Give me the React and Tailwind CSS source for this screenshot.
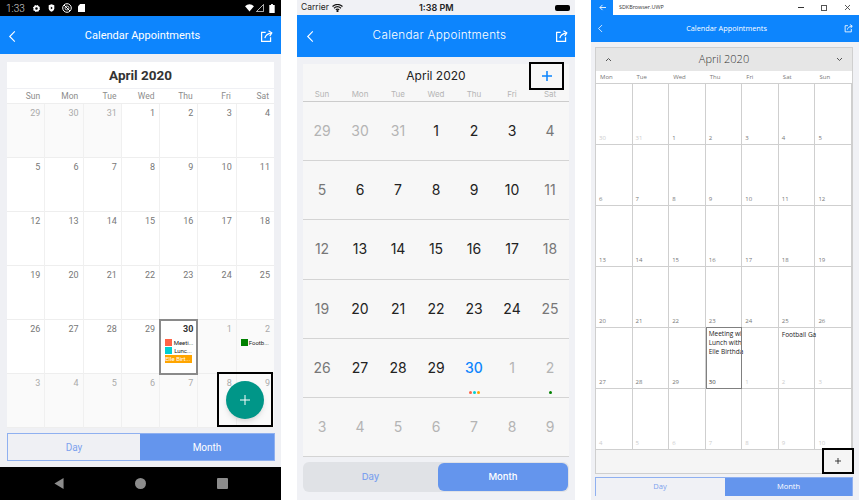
import React from 'react'

const sunWeek = ['Sun', 'Mon', 'Tue', 'Wed', 'Thu', 'Fri', 'Sat']
const monWeek = ['Mon', 'Tue', 'Wed', 'Thu', 'Fri', 'Sat', 'Sun']

// [day, inMonth]
const buildDays = (prev, prevEnd, total) => {
  const days = []
  for (let d = prev; d <= prevEnd; d++) days.push([d, false])
  for (let d = 1; d <= 30; d++) days.push([d, true])
  let n = 1
  while (days.length < total) days.push([n++, false])
  return days
}

const sunDays = buildDays(29, 31, 42)
const monDays = buildDays(30, 31, 42)

const ShareIcon = ({ size = 14 }) => (
  <svg width={size} height={size} viewBox="0 0 16 16" fill="none" stroke="white" strokeWidth="1.5">
    <path d="M7 3H2v11h11V9" />
    <path d="M6 10c.5-3 3-5.500 8.500-6.500" />
    <path d="M10.500 1l4 2.500-2.500 4" />
  </svg>
)

const BackIcon = ({ size = 14 }) => (
  <svg width={size} height={size} viewBox="0 0 14 14" fill="none" stroke="white" strokeWidth="1.2">
    <path d="M9.500 1.500 4 7l5.500 5.500" />
  </svg>
)

const AndroidStatus = () => (
  <div className="h-[16px] bg-black flex items-center pl-[6px] pr-[6px] text-white shrink-0">
    <span className="text-[10px] text-[#d8d8d8] w-[27px] font-light">1:33</span>
    <svg width="7" height="7" viewBox="0 0 10 10"><circle cx="5" cy="5" r="3" fill="none" stroke="white" strokeWidth="2.400" /><circle cx="5" cy="5" r="4.200" fill="none" stroke="white" strokeWidth="1.600" strokeDasharray="1.800 1.500" /></svg>
    <svg width="7" height="8" viewBox="0 0 10 11" className="ml-[8px]"><path d="M1 1.500 5 0l4 1.500V6c0 2.500-2 4-4 5-2-1-4-2.500-4-5z" fill="white" /><path d="M4 3.500 6.800 5.500 4 7.500z" fill="black" /></svg>
    <svg width="10" height="10" viewBox="0 0 10 10" fill="none" stroke="white" className="ml-[7px]"><circle cx="5" cy="5" r="4.300" /><path d="M2 2l6 6" /><circle cx="5" cy="5" r="2" strokeWidth="0.800" /></svg>
    <svg width="7" height="8" viewBox="0 0 8 9" className="ml-[6px]"><path d="M2.500 0H8v9H0V2.500z" fill="white" /></svg>
    <div className="ml-auto flex items-center gap-[2px]">
      <svg width="9" height="8" viewBox="0 0 10 9"><path d="M0 2.500C3-.5 7-.5 10 2.500L5 8.500z" fill="white" /></svg>
      <svg width="8" height="8" viewBox="0 0 9 9"><path d="M8.500.5v8H.5z" fill="none" stroke="white" strokeWidth="0.800" /></svg>
      <svg width="6" height="9" viewBox="0 0 6 10" className="ml-[3px]"><path d="M2 0h2v1h2v9H0V1h2z" fill="white" /></svg>
    </div>
  </div>
)

const AndroidPanel = () => (
  <div className="w-[281px] h-[500px] bg-[#eff0f4] flex flex-col shrink-0 font-['Roboto',sans-serif]">
    <AndroidStatus />
    <div className="h-[38px] pt-[2px] bg-[#0d85fd] flex items-center justify-between pl-[6px] pr-[8px] text-white shrink-0">
      <BackIcon size={13} />
      <span className="ml-[6px] text-[11px]">Calendar Appointments</span>
      <ShareIcon size={13} />
    </div>
    <div className="mx-[7px] mt-[8px] w-[267px] relative">
      <div className="h-[26px] pt-[1px] bg-white flex items-center justify-center text-[13.500px] font-bold text-[#333]">April 2020</div>
      <div className="mt-[1px] h-[15px] bg-white grid grid-cols-7 border-b border-[#eee]">
        {sunWeek.map((d) => (
          <span key={d} className="text-[8.500px] text-[#8c8c8c] text-right pr-[5px] leading-[14px]">{d}</span>
        ))}
      </div>
      <div className="grid grid-cols-7 bg-[#f0f0f0] gap-x-[1px]">
        {sunDays.map(([d, cur], i) => {
          const today = d === 30 && cur
          return (
            <div
              key={i}
              className={`h-[54px] pr-[4px] pt-[3px] text-right text-[9px] border-b border-[#eeeeee] ${cur ? 'bg-white' : 'bg-[#fafafa]'} ${today ? 'relative z-10 outline-2 outline-[#8a8a8a] -outline-offset-1 font-bold text-[#333]' : cur ? 'text-[#777]' : 'text-[#aaa]'}`}
            >
              <div className="leading-[12px]">{d}</div>
              {today && (
                <div className="mt-[4px] pl-[5px] flex flex-col gap-[1px] font-normal text-[6px] text-left leading-[7px] whitespace-nowrap">
                  <div className="flex items-center gap-[2px] text-[#222]"><span className="w-[7px] h-[7px] bg-[#ff6347]" />Meeti...</div>
                  <div className="flex items-center gap-[2px] text-[#222]"><span className="w-[7px] h-[7px] bg-[#00ced1]" />Lunc...</div>
                  <div className="bg-[#ffa500] text-white h-[8px] w-[27px] leading-[8px]">Elle Birt...</div>
                </div>
              )}
              {i === 34 && (
                <div className="mt-[4px] pl-[4px] flex items-center gap-[1px] text-[6px] text-left text-[#222] leading-[7px] whitespace-nowrap -mr-[3px]">
                  <span className="w-[7px] h-[7px] bg-[#008000] shrink-0" />Footb...
                </div>
              )}
            </div>
          )
        })}
      </div>
      <div className="absolute left-[210px] top-[310px] z-20 w-[56px] h-[55px] border-[2px] border-black flex items-center justify-center">
        <div className="w-[38px] h-[38px] rounded-full bg-[#009688] shadow-md flex items-center justify-center">
          <svg width="10" height="10" viewBox="0 0 10 10" stroke="white" strokeWidth="1"><path d="M5 0v10M0 5h10" /></svg>
        </div>
      </div>
    </div>
    <div className="mx-[7px] mt-[5px] h-[28px] w-[268px] border border-[#8fb0f0] flex text-[10px] shrink-0">
      <div className="w-[132px] flex items-center justify-center text-[#7ea2ee]">Day</div>
      <div className="flex-1 bg-[#6495ed] flex items-center justify-center text-white">Month</div>
    </div>
    <div className="mt-[6px] flex-1 bg-black flex items-center justify-center gap-[71px]">
      <svg width="10" height="11" viewBox="0 0 10 12"><path d="M10 0v12L0 6z" fill="#8c8c8c" /></svg>
      <span className="w-[11px] h-[11px] rounded-full bg-[#8c8c8c]" />
      <span className="w-[11px] h-[11px] rounded-[1px] bg-[#8c8c8c]" />
    </div>
  </div>
)

const IosPanel = () => (
  <div className="ml-[16px] w-[278px] h-[500px] bg-[#f0f1f5] flex flex-col shrink-0 font-['Inter',sans-serif]">
    <div className="h-[15px] flex items-center pl-[4px] pr-[5px] text-[8.500px] text-[#222] shrink-0 relative">
      <span>Carrier</span>
      <svg width="11" height="8" viewBox="0 0 11 8" className="ml-[3px]" fill="none" stroke="#111" strokeWidth="1.200"><path d="M.5 2.500c3-2.500 7-2.500 10 0M2 4.200c2-1.700 5-1.700 7 0M3.800 5.800c1-.8 2.400-.8 3.400 0" /><circle cx="5.500" cy="7" r=".5" fill="#111" /></svg>
      <span className="absolute left-[122px] text-[9px] font-semibold">1:38 PM</span>
      <span className="ml-auto w-[15px] h-[6px] rounded-[2px] bg-black" />
    </div>
    <div className="h-[42px] bg-[#0d85fd] flex items-center justify-between pl-[7px] pr-[7px] text-white shrink-0">
      <BackIcon size={13} />
      <span className="ml-[7px] text-[11.700px] tracking-[0.300px] font-light">Calendar Appointments</span>
      <ShareIcon size={13} />
    </div>
    <div className="mx-[6px] mt-[7px] w-[266px] bg-[#f7f7f7] relative">
      <div className="h-[23px] flex items-center justify-center text-[12px] text-[#222]">April 2020</div>
      <div className="h-[15px] grid grid-cols-7 border-b border-[#ccc]">
        {sunWeek.map((d) => (
          <span key={d} className="text-[8px] text-[#b5b5b5] text-center leading-[14px]">{d}</span>
        ))}
      </div>
      <div className="grid grid-cols-7">
        {sunDays.map(([d, cur], i) => {
          const weekend = i % 7 === 0 || i % 7 === 6
          const today = d === 30 && cur
          return (
            <div key={i} className="h-[59.200px] border-b border-[#d4d4d4] flex flex-col items-center pt-[21px] relative">
              <span className={`text-[14px] leading-[15px] ${today ? 'text-[#0d85fd] font-medium' : !cur ? 'text-[#b4b4b4]' : weekend ? 'text-[#777]' : 'text-[#222]'}`}>{d}</span>
              {today && (
                <div className="absolute bottom-[3px] flex gap-[1px]">
                  <span className="w-[3px] h-[3px] rounded-full bg-[#ff6347]" />
                  <span className="w-[3px] h-[3px] rounded-full bg-[#00ced1]" />
                  <span className="w-[3px] h-[3px] rounded-full bg-[#ffa500]" />
                </div>
              )}
              {i === 34 && <span className="absolute bottom-[3px] w-[3px] h-[3px] rounded-full bg-[#008000]" />}
            </div>
          )
        })}
      </div>
      <div className="absolute left-[226px] -top-[2px] w-[35px] h-[28px] border-[2px] border-black flex items-center justify-center">
        <svg width="10" height="10" viewBox="0 0 11 11" stroke="#0d85fd" strokeWidth="1.700"><path d="M5.500 0v11M0 5.500h11" /></svg>
      </div>
    </div>
    <div className="mx-[6px] mt-[5px] w-[266px] h-[30px] rounded-[6px] bg-[#e0e2e6] flex text-[9.500px] font-medium shrink-0">
      <div className="w-[135px] flex items-center justify-center text-[#7ea2ee]">Day</div>
      <div className="flex-1 my-[1px] mr-[1px] rounded-[6px] bg-[#6495ed] flex items-center justify-center text-white">Month</div>
    </div>
  </div>
)

const UwpPanel = () => (
  <div className="ml-[16px] w-[268px] h-[500px] bg-[#f0f1f5] flex flex-col shrink-0 font-['Open_Sans',sans-serif]">
    <div className="h-[15px] bg-white flex items-center text-[5.400px] text-[#333] shrink-0">
      <div className="w-[22px] h-[15px] bg-[#0d85fd] flex items-center justify-center">
        <svg width="7" height="7" viewBox="0 0 8 8" fill="none" stroke="white"><path d="M8 4H1M4 1 1 4l3 3" /></svg>
      </div>
      <span className="ml-[6px]">SDKBrowser.UWP</span>
      <div className="ml-auto mr-[8px] flex items-center gap-[17px]">
        <span className="w-[6px] h-[1px] bg-[#333]" />
        <span className="w-[6px] h-[6px] border border-[#555]" />
        <svg width="7" height="7" viewBox="0 0 7 7" stroke="#333" strokeWidth="0.800"><path d="M1 1l5 5M6 1 1 6" /></svg>
      </div>
    </div>
    <div className="h-[27px] bg-[#0d85fd] flex items-center justify-between pl-[5px] pr-[6px] text-white shrink-0">
      <BackIcon size={9} />
      <span className="ml-[4px] text-[7.300px]">Calendar Appointments</span>
      <ShareIcon size={9} />
    </div>
    <div className="mx-[4px] mt-[5px] w-[258px] border border-[#cfcfcf] relative flex flex-col">
      <div className="h-[23px] bg-[#e6e6e6] flex items-center justify-between px-[9px] text-[#333]">
        <svg width="7" height="5" viewBox="0 0 7 5" fill="none" stroke="#555"><path d="M1 4l2.500-2.500L6 4" /></svg>
        <span className="text-[11px] font-light">April 2020</span>
        <svg width="7" height="5" viewBox="0 0 7 5" fill="none" stroke="#555"><path d="M1 1l2.500 2.500L6 1" /></svg>
      </div>
      <div className="h-[13px] bg-white grid grid-cols-7 border-b border-[#cfcfcf]">
        {monWeek.map((d) => (
          <span key={d} className="text-[6px] text-[#777] pl-[4px] leading-[12px]">{d}</span>
        ))}
      </div>
      <div className="grid grid-cols-7 bg-white">
        {monDays.map(([d, cur], i) => {
          const today = d === 30 && cur
          return (
            <div
              key={i}
              className={`h-[61px] border-r border-b border-[#cfcfcf] flex flex-col justify-between pl-[3px] pb-[1px] relative text-[6px] ${today ? 'z-10 -mt-[1px] h-[62px] outline outline-1 outline-[#808080] -outline-offset-1 text-[#333]' : cur ? 'text-[#777]' : 'text-[#ccc]'}`}
            >
              <div className="text-[6.500px] text-[#222] leading-[9px] pt-[2px] whitespace-nowrap">
                {today && (<><div>Meeting wi</div><div>Lunch with</div><div>Elle Birthda</div></>)}
                {i === 33 && <div>Football Ga</div>}
              </div>
              <span>{d}</span>
            </div>
          )
        })}
      </div>
      <div className="h-[23px] bg-[#f5f5f5] relative">
        <div className="absolute left-[226px] -top-[2px] w-[32px] h-[26px] border-[2px] border-black flex items-center justify-center">
          <svg width="6" height="6" viewBox="0 0 7 7" stroke="#222"><path d="M3.500 0v7M0 3.500h7" /></svg>
        </div>
      </div>
    </div>
    <div className="mx-[4px] mt-[3px] w-[258px] h-[19px] border border-[#8fb0f0] border-b-0 flex text-[7.500px] shrink-0">
      <div className="w-[128px] flex items-center justify-center text-[#7ea2ee]">Day</div>
      <div className="flex-1 ml-[1px] bg-[#6495ed] flex items-center justify-center text-white">Month</div>
    </div>
  </div>
)

const App = () => (
  <div className="w-[859px] h-[500px] bg-white flex overflow-hidden">
    <AndroidPanel />
    <IosPanel />
    <UwpPanel />
  </div>
)

export default App
